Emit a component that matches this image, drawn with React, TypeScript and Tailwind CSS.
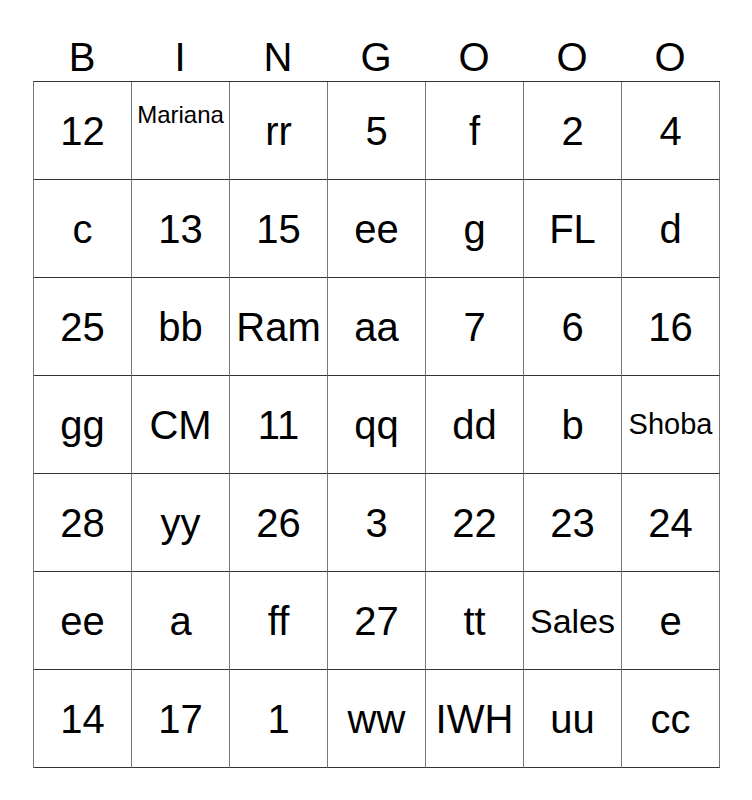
const header = ['B', 'I', 'N', 'G', 'O', 'O', 'O']

const cells: string[][] = [
  ['12', 'Mariana', 'rr', '5', 'f', '2', '4'],
  ['c', '13', '15', 'ee', 'g', 'FL', 'd'],
  ['25', 'bb', 'Ram', 'aa', '7', '6', '16'],
  ['gg', 'CM', '11', 'qq', 'dd', 'b', 'Shoba'],
  ['28', 'yy', '26', '3', '22', '23', '24'],
  ['ee', 'a', 'ff', '27', 'tt', 'Sales', 'e'],
  ['14', '17', '1', 'ww', 'IWH', 'uu', 'cc'],
]

function Cell({ text }: { text: string }) {
  if (text === 'Mariana') {
    return (
      <div className="flex h-[98px] justify-center border-r border-b border-r-[#777] border-b-[#333] pt-[21px] text-[24px] leading-[24px]">
        {text}
      </div>
    )
  }
  const size =
    text === 'Shoba' ? 'text-[29px]' : text === 'Sales' ? 'text-[34px]' : 'text-[40px]'
  return (
    <div
      className={`flex h-[98px] items-center justify-center border-r border-b border-r-[#777] border-b-[#333] leading-none ${size}`}
    >
      {text}
    </div>
  )
}

export default function App() {
  return (
    <main
      className="h-[800px] w-[752px] bg-white text-black"
      style={{ fontFamily: '"Liberation Sans", Arial, sans-serif' }}
    >
      <div className="ml-[33px] w-[687px]">
        {/* Header letters */}
        <div className="grid h-[81px] grid-cols-[repeat(7,98px)] pt-[37px] text-[40px] leading-[40px]">
          {header.map((h, i) => (
            <div key={i} className="text-center">
              {h}
            </div>
          ))}
        </div>

        {/* Board */}
        <div className="grid w-[687px] grid-cols-[repeat(7,98px)] border-t border-l border-t-[#333] border-l-[#777]">
          {cells.flat().map((c, i) => (
            <Cell key={i} text={c} />
          ))}
        </div>
      </div>
    </main>
  )
}
